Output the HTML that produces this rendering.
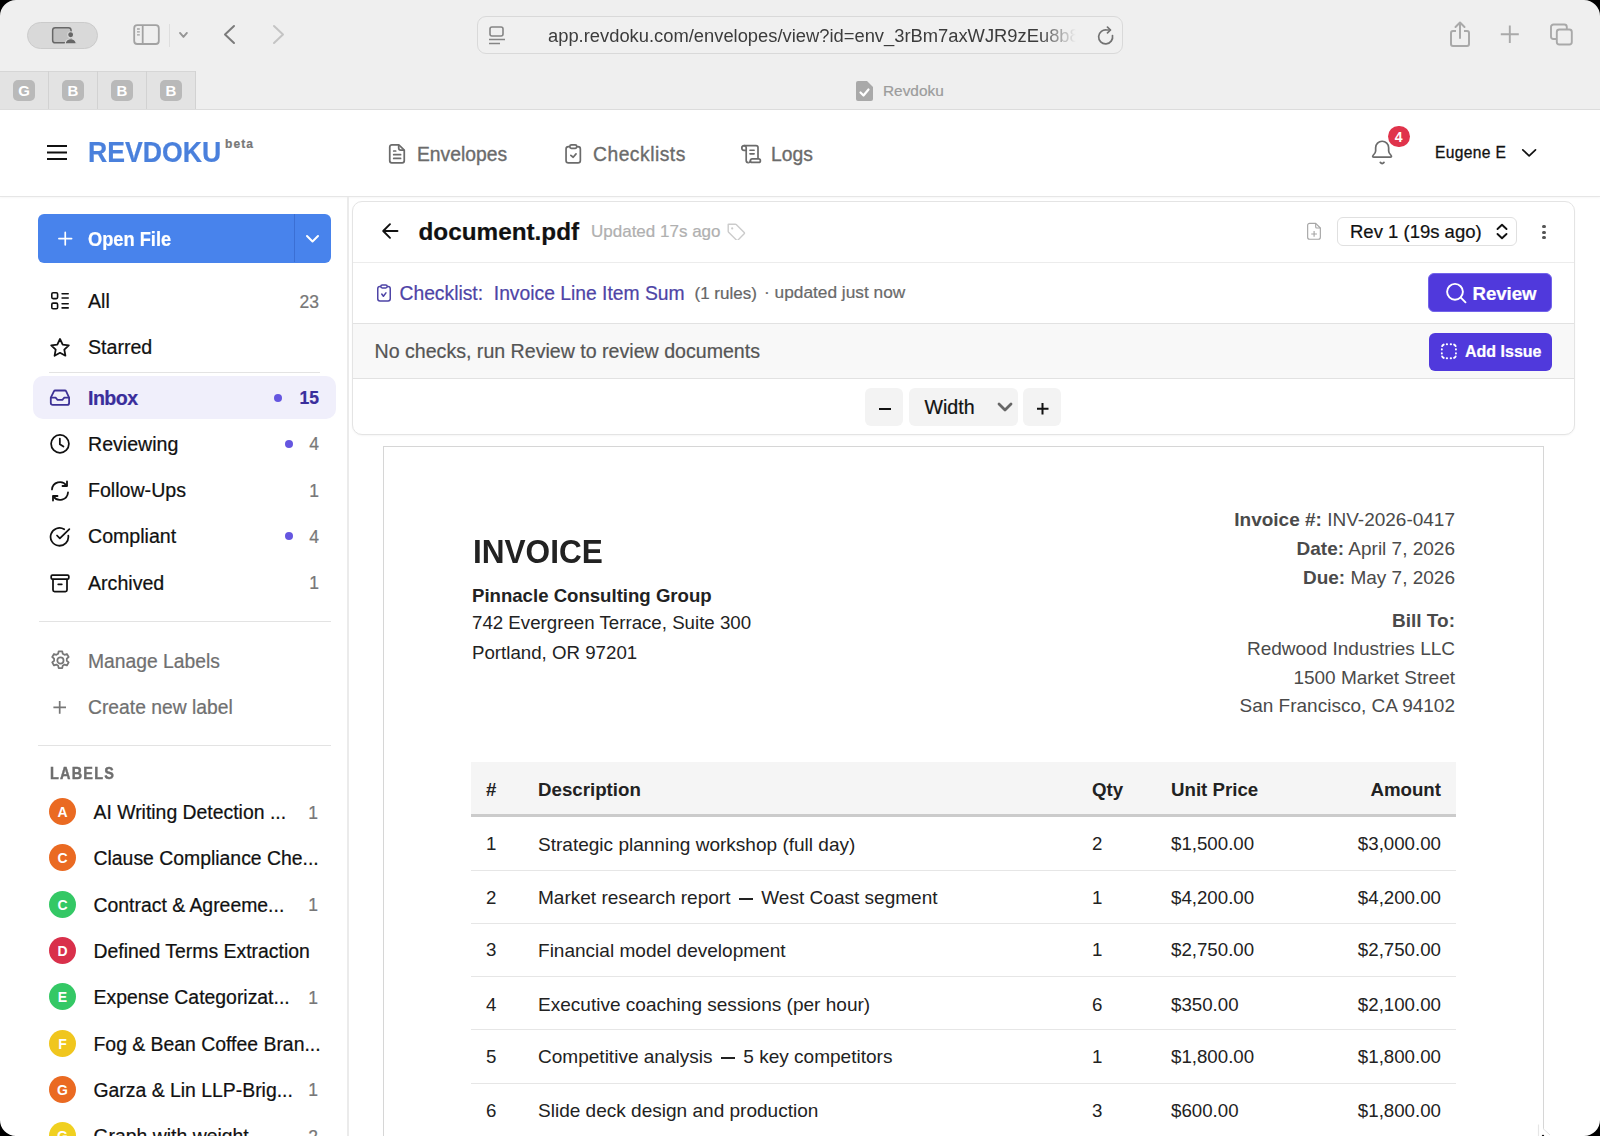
<!DOCTYPE html>
<html><head><meta charset="utf-8"><title>Revdoku</title>
<style>
html,body{margin:0;padding:0;}
body{width:1600px;height:1136px;position:relative;overflow:hidden;background:#fff;font-family:"Liberation Sans",sans-serif;}
.t{position:absolute;line-height:1;white-space:nowrap;}
.ui{-webkit-text-stroke:0.22px currentColor;}
svg{display:block}
</style></head><body>
<div style="position:absolute;left:0px;top:0px;width:1600px;height:109px;background:#efefef"></div>
<div style="position:absolute;left:0px;top:109px;width:1600px;height:1px;background:#dcdcdc"></div>
<div style="position:absolute;left:0px;top:71px;width:196px;height:38px;background:#e3e3e3;border-top:1px solid #d6d6d6;box-sizing:border-box"></div>
<div style="position:absolute;left:13px;top:80px;width:22px;height:21px;border-radius:5px;background:#b9b9b9;color:#fff;font:700 15px/21px 'Liberation Sans';text-align:center">G</div>
<div style="position:absolute;left:47.8px;top:71px;width:1px;height:38px;background:#d2d2d2"></div>
<div style="position:absolute;left:62px;top:80px;width:22px;height:21px;border-radius:5px;background:#b9b9b9;color:#fff;font:700 15px/21px 'Liberation Sans';text-align:center">B</div>
<div style="position:absolute;left:97.0px;top:71px;width:1px;height:38px;background:#d2d2d2"></div>
<div style="position:absolute;left:111px;top:80px;width:22px;height:21px;border-radius:5px;background:#b9b9b9;color:#fff;font:700 15px/21px 'Liberation Sans';text-align:center">B</div>
<div style="position:absolute;left:146.2px;top:71px;width:1px;height:38px;background:#d2d2d2"></div>
<div style="position:absolute;left:160px;top:80px;width:22px;height:21px;border-radius:5px;background:#b9b9b9;color:#fff;font:700 15px/21px 'Liberation Sans';text-align:center">B</div>
<div style="position:absolute;left:195px;top:71px;width:1px;height:38px;background:#d2d2d2"></div>
<div style="position:absolute;left:27px;top:22px;width:71px;height:27px;background:#d9d9d9;border:1px solid #cbcbcb;border-radius:14px;box-sizing:border-box"></div>
<svg style="position:absolute;left:51px;top:26px;" width="27" height="19" viewBox="0 0 27 19" fill="none"><rect x="1.65" y="1.75" width="18.4" height="15.1" rx="2.6" stroke="#676767" stroke-width="1.5" fill="#c1c1c1"/><circle cx="19.65" cy="8.8" r="3" fill="#666" stroke="#d9d9d9" stroke-width="1.1"/><path d="M14.2 17.9a5.55 5.2 0 0 1 11.1 0z" fill="#666" stroke="#d9d9d9" stroke-width="1.1"/></svg>
<svg style="position:absolute;left:133px;top:24px;" width="27" height="21" viewBox="0 0 27 21" fill="none"><rect x="1.2" y="1.2" width="24.6" height="18.8" rx="3" stroke="#a2a2a2" stroke-width="1.8"/><path d="M9.7 1.2v18.8" stroke="#a2a2a2" stroke-width="1.8"/><path d="M4 5h2.8M4 7.9h2.8M4 10.8h2.8" stroke="#a2a2a2" stroke-width="1.3"/></svg>
<div style="position:absolute;left:169px;top:24px;width:1px;height:23px;background:#dedede"></div>
<svg style="position:absolute;left:177px;top:30px;" width="12" height="9" viewBox="0 0 12 9" fill="none"><path d="M3 2.9L6.45 6.9 9.9 2.9" stroke="#959595" stroke-width="1.9" stroke-linecap="round" stroke-linejoin="round"/></svg>
<svg style="position:absolute;left:222px;top:24px;" width="15" height="21" viewBox="0 0 15 21" fill="none"><path d="M12 2L3 10.5 12 19" stroke="#7b7b7b" stroke-width="2" stroke-linecap="round" stroke-linejoin="round"/></svg>
<svg style="position:absolute;left:271px;top:24px;" width="15" height="21" viewBox="0 0 15 21" fill="none"><path d="M3 2l9 8.5L3 19" stroke="#c4c4c4" stroke-width="2" stroke-linecap="round" stroke-linejoin="round"/></svg>
<div style="position:absolute;left:477px;top:16px;width:646px;height:38px;background:#f0f0f0;border:1px solid #d9d9d9;border-radius:9px;box-sizing:border-box"></div>
<svg style="position:absolute;left:488px;top:26px;" width="18" height="20" viewBox="0 0 18 20" fill="none"><rect x="2" y="1" width="13" height="9" rx="2" stroke="#858585" stroke-width="1.6"/><path d="M1 13.5h16M1 17.5h11" stroke="#858585" stroke-width="1.6"/></svg>
<div class="t" style="left:548px;top:25px;font-size:18.35px;line-height:22px;color:#3c3c3c;width:528px;overflow:hidden;-webkit-mask-image:linear-gradient(90deg,#000 0,#000 93%,transparent 100%)">app.revdoku.com/envelopes/view?id=env_3rBm7axWJR9zEu8b8bx</div>
<svg style="position:absolute;left:1097px;top:26px;" width="20" height="21" viewBox="0 0 20 21" fill="none"><path d="M15.5 9.5A7 7 0 1 1 10 4h3" stroke="#727272" stroke-width="1.7" stroke-linecap="round"/><path d="M10.5 1.2l3 2.8-3 2.8" stroke="#727272" stroke-width="1.7" stroke-linecap="round" stroke-linejoin="round"/></svg>
<svg style="position:absolute;left:1449px;top:21px;" width="22" height="27" viewBox="0 0 22 27" fill="none"><path d="M7 10H4a2 2 0 0 0-2 2v11a2 2 0 0 0 2 2h14a2 2 0 0 0 2-2V12a2 2 0 0 0-2-2h-3" stroke="#a9a9a9" stroke-width="2"/><path d="M11 17V2M6.5 6L11 1.5 15.5 6" stroke="#a9a9a9" stroke-width="2" stroke-linecap="round" stroke-linejoin="round"/></svg>
<svg style="position:absolute;left:1499px;top:24px;" width="22" height="21" viewBox="0 0 22 21" fill="none"><path d="M10.8 1.5V19M1.8 10.25h18" stroke="#a9a9a9" stroke-width="1.9"/></svg>
<svg style="position:absolute;left:1548px;top:22px;" width="27" height="26" viewBox="0 0 27 26" fill="none"><path d="M8.8 17H5.5A2.5 2.5 0 0 1 3 14.5V5A2.5 2.5 0 0 1 5.5 2.5H16.3A2.5 2.5 0 0 1 18.8 5V7.5" stroke="#a9a9a9" stroke-width="1.9"/><rect x="8.8" y="7.5" width="15" height="15" rx="2.5" stroke="#a9a9a9" stroke-width="1.9"/></svg>
<svg style="position:absolute;left:855px;top:80px;" width="19" height="22" viewBox="0 0 19 22" fill="none"><path d="M3 1h9l6 6v12a2 2 0 0 1-2 2H3a2 2 0 0 1-2-2V3a2 2 0 0 1 2-2z" fill="#a9a9a9"/><path d="M5.5 12.5l3 3 5-6" stroke="#fff" stroke-width="2.2" stroke-linecap="round" stroke-linejoin="round"/></svg>
<div class="t ui" style="left:883px;top:82.76px;font-size:15.4px;font-weight:400;color:#9c9c9c;">Revdoku</div>
<div style="position:absolute;left:0px;top:110px;width:1600px;height:86px;background:#fff"></div>
<div style="position:absolute;left:0px;top:196px;width:1600px;height:1px;background:#e6e6e6;box-shadow:0 1px 2px rgba(0,0,0,0.05)"></div>
<svg style="position:absolute;left:46px;top:144px;" width="22" height="17" viewBox="0 0 22 17" fill="none"><path d="M1 2h20M1 8.5h20M1 15h20" stroke="#111" stroke-width="2.2"/></svg>
<div class="t ui" style="left:88px;top:138.42px;font-size:28.8px;font-weight:700;color:#4a80dc;transform:scaleX(0.925);transform-origin:0 0">REVDOKU</div>
<div class="t ui" style="left:225px;top:138.24px;font-size:12px;font-weight:700;color:#777;letter-spacing:1.1px">beta</div>
<svg style="position:absolute;left:388.4px;top:143px;" width="19" height="22" viewBox="0 0 19 22" fill="none"><path d="M3.9 1.75h6.9l5.45 5.45v10.6a2 2 0 0 1-2 2H3.75a2 2 0 0 1-2-2V3.9a2.15 2.15 0 0 1 2.15-2.15z" stroke="#6b6b6b" stroke-width="1.75" stroke-linejoin="round"/><path d="M10.7 1.9v3.2a2.1 2.1 0 0 0 2.1 2.1h3.3" stroke="#6b6b6b" stroke-width="1.75"/><path d="M5.7 8h2M5.7 11.7h6.9M5.7 15.4h6.9" stroke="#6b6b6b" stroke-width="1.7" stroke-linecap="round"/></svg>
<div class="t ui" style="left:417px;top:144.76px;font-size:19.3px;font-weight:400;color:#6b6b6b;-webkit-text-stroke:0.35px #6b6b6b">Envelopes</div>
<svg style="position:absolute;left:564px;top:143px;" width="19" height="22" viewBox="0 0 19 22" fill="none"><rect x="2.05" y="3.65" width="14.3" height="16.3" rx="2.4" stroke="#6b6b6b" stroke-width="1.7"/><rect x="5.85" y="1.95" width="6.9" height="3.5" rx="1.6" stroke="#6b6b6b" stroke-width="1.7" fill="#fff"/><path d="M6.85 12.3L9.2 14.25 12.05 10.85" stroke="#6b6b6b" stroke-width="1.7" stroke-linecap="round" stroke-linejoin="round"/></svg>
<div class="t ui" style="left:593px;top:144.76px;font-size:19.3px;font-weight:400;color:#6b6b6b;-webkit-text-stroke:0.35px #6b6b6b;letter-spacing:0.5px">Checklists</div>
<svg style="position:absolute;left:740px;top:143px;" width="23" height="22" viewBox="0 0 23 22" fill="none"><path d="M4 2.6h12a2 2 0 0 1 2 2V15.9" stroke="#6b6b6b" stroke-width="1.7"/><path d="M6.2 7.4H4.1A2.4 2.4 0 0 1 1.8 5 2.4 2.4 0 0 1 4.1 2.6 2.1 2.1 0 0 1 6.2 4.7V17.6a2 2 0 0 0 2 2" stroke="#6b6b6b" stroke-width="1.7" stroke-linejoin="round"/><rect x="10.4" y="15.9" width="10" height="3.5" rx="1.75" stroke="#6b6b6b" stroke-width="1.7"/><path d="M8.2 19.6a2 2 0 0 0 2.2-2" stroke="#6b6b6b" stroke-width="1.7"/><path d="M9.95 7.2h4.2M9.95 10.85h4.2" stroke="#6b6b6b" stroke-width="1.6" stroke-linecap="round"/></svg>
<div class="t ui" style="left:771px;top:144.76px;font-size:19.3px;font-weight:400;color:#6b6b6b;-webkit-text-stroke:0.35px #6b6b6b">Logs</div>
<svg style="position:absolute;left:1369px;top:138px;" width="27" height="28" viewBox="0 0 27 28" fill="none"><path d="M6.65 9.75a6.5 6.5 0 0 1 13 0v3.2c0 1.8 1 3 2.3 4.3 1 1 .5 1.9-.7 1.9H4.9c-1.2 0-1.7-.9-.7-1.9 1.3-1.3 2.45-2.5 2.45-4.3z" stroke="#6b6b6b" stroke-width="1.7" stroke-linejoin="round"/><path d="M11.3 24.4q1.85 2.3 3.7 0" stroke="#6b6b6b" stroke-width="1.7" stroke-linecap="round"/></svg>
<div style="position:absolute;left:1388px;top:125.5px;width:21.5px;height:21.5px;border-radius:50%;background:#e0334b;color:#fff;font:700 14px/22px 'Liberation Sans';text-align:center">4</div>
<div class="t ui" style="left:1435px;top:145.39px;font-size:15.6px;font-weight:400;color:#111;-webkit-text-stroke:0.3px #111;letter-spacing:0.35px">Eugene E</div>
<svg style="position:absolute;left:1521px;top:147px;" width="17" height="11" viewBox="0 0 17 11" fill="none"><path d="M1.8 2.8L8.15 8.9 14.5 2.8" stroke="#111" stroke-width="1.7" stroke-linecap="round" stroke-linejoin="round"/></svg>
<div style="position:absolute;left:347px;top:197px;width:2px;height:939px;background:#ebebeb"></div>
<div style="position:absolute;left:38px;top:214px;width:293px;height:48.5px;background:#4883ec;border-radius:6px"></div>
<div style="position:absolute;left:294px;top:214px;width:1px;height:48px;background:#3b6fd4"></div>
<svg style="position:absolute;left:56px;top:230px;" width="18" height="18" viewBox="0 0 18 18" fill="none"><path d="M9.25 2.4v12.4M2.9 8.6h12.7" stroke="#fff" stroke-width="1.7" stroke-linecap="round"/></svg>
<div class="t ui" style="left:87.8px;top:229.05px;font-size:20.5px;font-weight:700;color:#fff;transform:scaleX(0.89);transform-origin:0 0">Open File</div>
<svg style="position:absolute;left:305px;top:234px;" width="15" height="10" viewBox="0 0 15 10" fill="none"><path d="M2 2l5.5 5.5L13 2" stroke="#fff" stroke-width="2" stroke-linecap="round" stroke-linejoin="round"/></svg>
<svg style="position:absolute;left:50px;top:291px;" width="20" height="20" viewBox="0 0 20 20" fill="none"><rect x="1.8" y="1.8" width="5.8" height="5.8" rx="1.3" stroke="#111" stroke-width="1.6"/><rect x="1.8" y="12.1" width="5.8" height="5.7" rx="1.3" stroke="#111" stroke-width="1.6"/><path d="M12.1 2.8h6.1M12.1 7h6.1M12.1 12.7h6.1M12.1 16.9h6.1" stroke="#111" stroke-width="1.6" stroke-linecap="round"/></svg>
<div class="t ui" style="left:88px;top:292.01px;font-size:19.6px;font-weight:400;color:#111;">All</div>
<div class="t ui" style="right:1281px;top:293.79px;font-size:17.5px;font-weight:400;color:#777;">23</div>
<svg style="position:absolute;left:49px;top:336.6px;" width="22" height="22" viewBox="0 0 22 22" fill="none"><path d="M11 2l2.7 5.6 6.1.8-4.5 4.2 1.1 6.1L11 15.8l-5.4 2.9 1.1-6.1L2.2 8.4l6.1-.8z" stroke="#111" stroke-width="1.8" stroke-linejoin="round"/></svg>
<div class="t ui" style="left:88px;top:338.01px;font-size:19.6px;font-weight:400;color:#111;">Starred</div>
<div style="position:absolute;left:49px;top:372px;width:271px;height:1px;background:#e3e3e3"></div>
<div style="position:absolute;left:33px;top:376px;width:303px;height:43px;background:#f0effb;border-radius:10px"></div>
<svg style="position:absolute;left:49px;top:388px;" width="22" height="20" viewBox="0 0 22 20" fill="none"><path d="M1.8 9.6L4.9 3.3Q5.3 2.5 6.2 2.5H15.9Q16.8 2.5 17.2 3.3L20.1 9.6V14.9Q20.1 16.9 18.1 16.9H3.8Q1.8 16.9 1.8 14.9Z" stroke="#3d3196" stroke-width="1.8" stroke-linejoin="round"/><path d="M1.8 9.6H6.6L8.2 11.5Q8.6 11.9 9.2 11.9H12.7Q13.3 11.9 13.7 11.5L15.3 9.6H20.1" stroke="#3d3196" stroke-width="1.8" stroke-linejoin="round"/></svg>
<div class="t ui" style="left:88px;top:388.71px;font-size:19.6px;font-weight:700;color:#3a2e9c;letter-spacing:-0.55px">Inbox</div>
<div style="position:absolute;left:274px;top:394px;width:8px;height:8px;background:#6556e0;border-radius:50%"></div>
<div class="t ui" style="right:1281px;top:390.49px;font-size:17.5px;font-weight:700;color:#3a2e9c;">15</div>
<svg style="position:absolute;left:49px;top:433px;" width="22" height="22" viewBox="0 0 22 22" fill="none"><circle cx="11" cy="10.85" r="8.9" stroke="#111" stroke-width="1.75"/><path d="M10.85 5.6V11.2l3.6 2.3" stroke="#111" stroke-width="1.75" stroke-linecap="round" stroke-linejoin="round"/></svg>
<div class="t ui" style="left:88px;top:434.71px;font-size:19.6px;font-weight:400;color:#111;">Reviewing</div>
<div style="position:absolute;left:285px;top:440px;width:8px;height:8px;background:#6556e0;border-radius:50%"></div>
<div class="t ui" style="right:1281px;top:436.49px;font-size:17.5px;font-weight:400;color:#777;">4</div>
<svg style="position:absolute;left:49px;top:480px;" width="22" height="22" viewBox="0 0 22 22" fill="none"><path d="M3 9.5A8 8 0 0 1 17.5 5.5M19 12.5A8 8 0 0 1 4.5 16.5" stroke="#111" stroke-width="1.8" stroke-linecap="round"/><path d="M18 1.5v4.5h-4.5M4 20.5V16h4.5" stroke="#111" stroke-width="1.8" stroke-linecap="round" stroke-linejoin="round"/></svg>
<div class="t ui" style="left:88px;top:480.81px;font-size:19.6px;font-weight:400;color:#111;">Follow-Ups</div>
<div class="t ui" style="right:1281px;top:482.59px;font-size:17.5px;font-weight:400;color:#777;">1</div>
<svg style="position:absolute;left:49px;top:526px;" width="22" height="22" viewBox="0 0 22 22" fill="none"><path d="M19.3 9.7A8.9 8.9 0 1 1 15.2 3.3" stroke="#111" stroke-width="1.75" stroke-linecap="round"/><path d="M8 9.5l2.85 2.9 9.5-9.2" stroke="#111" stroke-width="1.75" stroke-linecap="round" stroke-linejoin="round"/></svg>
<div class="t ui" style="left:88px;top:527.21px;font-size:19.6px;font-weight:400;color:#111;">Compliant</div>
<div style="position:absolute;left:285px;top:532px;width:8px;height:8px;background:#6556e0;border-radius:50%"></div>
<div class="t ui" style="right:1281px;top:528.99px;font-size:17.5px;font-weight:400;color:#777;">4</div>
<svg style="position:absolute;left:49px;top:572px;" width="22" height="22" viewBox="0 0 22 22" fill="none"><rect x="2.2" y="3" width="17.6" height="4.1" rx="1.2" stroke="#111" stroke-width="1.75"/><path d="M4 7.5v10.4a1.6 1.6 0 0 0 1.6 1.6h10.8a1.6 1.6 0 0 0 1.6-1.6V7.5M9.2 12.3h3.6" stroke="#111" stroke-width="1.75" stroke-linecap="round"/></svg>
<div class="t ui" style="left:88px;top:573.61px;font-size:19.6px;font-weight:400;color:#111;">Archived</div>
<div class="t ui" style="right:1281px;top:575.39px;font-size:17.5px;font-weight:400;color:#777;">1</div>
<div style="position:absolute;left:39px;top:621px;width:292px;height:1px;background:#e3e3e3"></div>
<svg style="position:absolute;left:49.2px;top:649.2px;" width="22.9" height="22.9" viewBox="0 0 22 22" fill="none"><path d="M9.3 2.2h3.4l.5 2.4 1.7 1 2.3-.8 1.7 2.9-1.8 1.6v2l1.8 1.6-1.7 2.9-2.3-.8-1.7 1-.5 2.4H9.3l-.5-2.4-1.7-1-2.3.8-1.7-2.9 1.8-1.6v-2L3.1 7.7l1.7-2.9 2.3.8 1.7-1z" stroke="#777" stroke-width="1.7" stroke-linejoin="round"/><circle cx="11" cy="11" r="3" stroke="#777" stroke-width="1.7"/></svg>
<div class="t ui" style="left:88px;top:652.06px;font-size:19.3px;font-weight:400;color:#707070;">Manage Labels</div>
<svg style="position:absolute;left:50px;top:697px;" width="20" height="20" viewBox="0 0 20 20" fill="none"><path d="M9.7 3.9V16.8M3.4 10.35H16" stroke="#777" stroke-width="1.7"/></svg>
<div class="t ui" style="left:88px;top:698.06px;font-size:19.3px;font-weight:400;color:#707070;">Create new label</div>
<div style="position:absolute;left:38px;top:745px;width:293px;height:1px;background:#e3e3e3"></div>
<div class="t ui" style="left:49.7px;top:766.05px;font-size:16.6px;font-weight:700;color:#6e6e6e;letter-spacing:1.4px;transform:scaleX(0.87);transform-origin:0 0;-webkit-text-stroke:0.45px #6e6e6e">LABELS</div>
<div style="position:absolute;left:49px;top:798.0px;width:27px;height:27px;border-radius:50%;background:#ea6a22;color:#fff;font:700 14px/28.5px 'Liberation Sans';text-align:center">A</div>
<div class="t ui" style="left:93.5px;top:803.08px;font-size:19.4px;font-weight:400;color:#111;">AI Writing Detection ...</div>
<div class="t ui" style="right:1282px;top:804.69px;font-size:17.5px;font-weight:400;color:#777;">1</div>
<div style="position:absolute;left:49px;top:844.3px;width:27px;height:27px;border-radius:50%;background:#ea6a22;color:#fff;font:700 14px/28.5px 'Liberation Sans';text-align:center">C</div>
<div class="t ui" style="left:93.5px;top:849.38px;font-size:19.4px;font-weight:400;color:#111;">Clause Compliance Che...</div>
<div style="position:absolute;left:49px;top:890.6px;width:27px;height:27px;border-radius:50%;background:#34c865;color:#fff;font:700 14px/28.5px 'Liberation Sans';text-align:center">C</div>
<div class="t ui" style="left:93.5px;top:895.68px;font-size:19.4px;font-weight:400;color:#111;">Contract &amp; Agreeme...</div>
<div class="t ui" style="right:1282px;top:897.29px;font-size:17.5px;font-weight:400;color:#777;">1</div>
<div style="position:absolute;left:49px;top:936.9px;width:27px;height:27px;border-radius:50%;background:#d9304b;color:#fff;font:700 14px/28.5px 'Liberation Sans';text-align:center">D</div>
<div class="t ui" style="left:93.5px;top:941.98px;font-size:19.4px;font-weight:400;color:#111;">Defined Terms Extraction</div>
<div style="position:absolute;left:49px;top:983.2px;width:27px;height:27px;border-radius:50%;background:#34c865;color:#fff;font:700 14px/28.5px 'Liberation Sans';text-align:center">E</div>
<div class="t ui" style="left:93.5px;top:988.28px;font-size:19.4px;font-weight:400;color:#111;">Expense Categorizat...</div>
<div class="t ui" style="right:1282px;top:989.89px;font-size:17.5px;font-weight:400;color:#777;">1</div>
<div style="position:absolute;left:49px;top:1029.5px;width:27px;height:27px;border-radius:50%;background:#f0c61e;color:#fff;font:700 14px/28.5px 'Liberation Sans';text-align:center">F</div>
<div class="t ui" style="left:93.5px;top:1034.58px;font-size:19.4px;font-weight:400;color:#111;">Fog &amp; Bean Coffee Bran...</div>
<div style="position:absolute;left:49px;top:1075.8px;width:27px;height:27px;border-radius:50%;background:#ea6a22;color:#fff;font:700 14px/28.5px 'Liberation Sans';text-align:center">G</div>
<div class="t ui" style="left:93.5px;top:1080.88px;font-size:19.4px;font-weight:400;color:#111;">Garza &amp; Lin LLP-Brig...</div>
<div class="t ui" style="right:1282px;top:1082.49px;font-size:17.5px;font-weight:400;color:#777;">1</div>
<div style="position:absolute;left:49px;top:1122.1px;width:27px;height:27px;border-radius:50%;background:#f0d020;color:#fff;font:700 14px/28.5px 'Liberation Sans';text-align:center">G</div>
<div class="t ui" style="left:93.5px;top:1127.18px;font-size:19.4px;font-weight:400;color:#111;">Graph with weight</div>
<div class="t ui" style="right:1282px;top:1128.79px;font-size:17.5px;font-weight:400;color:#777;">2</div>
<div style="position:absolute;left:351.6px;top:200.8px;width:1223.4px;height:234.7px;background:#fff;border:1px solid #e4e4e4;border-radius:10px;box-sizing:border-box;box-shadow:0 1px 2px rgba(0,0,0,0.04)"></div>
<div style="position:absolute;left:353px;top:262px;width:1221px;height:1px;background:#ececec"></div>
<div style="position:absolute;left:353px;top:323px;width:1221px;height:56px;background:#f8f8f8;border-top:1px solid #e2e2e2;border-bottom:1px solid #e2e2e2;box-sizing:border-box"></div>
<svg style="position:absolute;left:381px;top:222px;" width="18" height="18" viewBox="0 0 18 18" fill="none"><path d="M16.5 9H2.5M9 2.2L2.2 9 9 15.8" stroke="#111" stroke-width="1.9" stroke-linecap="round" stroke-linejoin="round"/></svg>
<div class="t ui" style="left:418.5px;top:220.03px;font-size:24.3px;font-weight:700;color:#111;">document.pdf</div>
<div class="t ui" style="left:591px;top:223.01px;font-size:17px;font-weight:400;color:#b0b0b0;">Updated 17s ago</div>
<svg style="position:absolute;left:725.5px;top:222px;" width="21" height="18" viewBox="0 0 21 18" fill="none"><path d="M2.6 2.2h6.6q.6 0 1 .4l8 8q.6.6 0 1.2l-6.4 6.4q-.6.6-1.2 0l-8-8q-.4-.4-.4-1V2.6q0-.4.4-.4z" stroke="#cbcbcb" stroke-width="1.4" stroke-linejoin="round"/><circle cx="6.2" cy="6.4" r="1.1" fill="#cbcbcb"/></svg>
<svg style="position:absolute;left:1306px;top:222px;" width="18" height="19" viewBox="0 0 18 19" fill="none"><path d="M3.65 1.35h6.05l4.65 4.65v9.25a2 2 0 0 1-2 2H3.65a2 2 0 0 1-2-2V3.35a2 2 0 0 1 2-2z" stroke="#a6a6a6" stroke-width="1.15" stroke-linejoin="round"/><path d="M9.7 1.5v3.5a1 1 0 0 0 1 1h3.5M8.1 9.1v5.7M5.25 11.95h5.7" stroke="#a6a6a6" stroke-width="1.15"/></svg>
<div style="position:absolute;left:1337px;top:217px;width:180px;height:29px;background:#fff;border:1px solid #e0e0e0;border-radius:6px;box-sizing:border-box"></div>
<div class="t ui" style="left:1350px;top:223.34px;font-size:18.5px;font-weight:400;color:#111;">Rev 1 (19s ago)</div>
<svg style="position:absolute;left:1495px;top:223px;" width="14" height="17" viewBox="0 0 14 17" fill="none"><path d="M2.5 6L7 1.8 11.5 6M2.5 11L7 15.2 11.5 11" stroke="#111" stroke-width="1.9" stroke-linecap="round" stroke-linejoin="round"/></svg>
<div style="position:absolute;left:1542.4px;top:224.9px;width:3.4px;height:3.4px;background:#555;border-radius:50%"></div>
<div style="position:absolute;left:1542.4px;top:230.5px;width:3.4px;height:3.4px;background:#555;border-radius:50%"></div>
<div style="position:absolute;left:1542.4px;top:236.10000000000002px;width:3.4px;height:3.4px;background:#555;border-radius:50%"></div>
<svg style="position:absolute;left:376px;top:283px;" width="17" height="20" viewBox="0 0 17 20" fill="none"><rect x="1.75" y="3.45" width="12.5" height="14.6" rx="2.2" stroke="#4e44a6" stroke-width="1.5"/><rect x="4.85" y="1.95" width="6.3" height="3" rx="1.4" stroke="#4e44a6" stroke-width="1.5" fill="#fff"/><path d="M5.75 11L7.4 13.3 9.95 9.9" stroke="#4e44a6" stroke-width="1.5" stroke-linecap="round" stroke-linejoin="round"/></svg>
<div class="t ui" style="left:399.5px;top:284.26px;font-size:19.3px;font-weight:400;color:#4e44a6;">Checklist:&nbsp; Invoice Line Item Sum</div>
<div class="t ui" style="left:694.5px;top:284.61px;font-size:17px;font-weight:400;color:#666;">(1 rules)</div>
<div class="t ui" style="left:764px;top:284.36px;font-size:17.3px;font-weight:400;color:#6a6a6a;">· updated just now</div>
<div style="position:absolute;left:1428px;top:273px;width:124px;height:39px;background:#5039dc;border:1px solid #7263ea;border-radius:6px;box-sizing:border-box"></div>
<svg style="position:absolute;left:1444.6px;top:281.7px;" width="23" height="23" viewBox="0 0 23 23" fill="none"><circle cx="10" cy="9.8" r="7.9" stroke="#fff" stroke-width="1.9"/><path d="M15.6 15.4l4.9 4.9" stroke="#fff" stroke-width="1.9" stroke-linecap="round"/></svg>
<div class="t ui" style="left:1472.5px;top:285.06px;font-size:18.6px;font-weight:700;color:#fff;">Review</div>
<div class="t ui" style="left:374.5px;top:342.21px;font-size:19.6px;font-weight:400;color:#555;">No checks, run Review to review documents</div>
<div style="position:absolute;left:1429px;top:332.5px;width:123px;height:38px;background:#5039dc;border-radius:6px"></div>
<svg style="position:absolute;left:1440px;top:342px;" width="18" height="18" viewBox="0 0 18 18" fill="none"><path d="M2.15 4.1A3.2 3.2 0 0 1 3.7 2.55M14.1 2.55A3.2 3.2 0 0 1 15.65 4.1M15.65 14.4A3.2 3.2 0 0 1 14.1 15.95M3.7 15.95A3.2 3.2 0 0 1 2.15 14.4M6.75 2.25h.35M10.7 2.25h.35M6.75 16.25h.35M10.7 16.25h.35M1.85 7.2v.35M1.85 11.2v.35M15.95 7.2v.35M15.95 11.2v.35" stroke="#fff" stroke-width="1.9" stroke-linecap="round"/></svg>
<div class="t ui" style="left:1465px;top:343.66px;font-size:16.0px;font-weight:700;color:#fff;">Add Issue</div>
<div style="position:absolute;left:865px;top:388px;width:38px;height:38px;background:#f3f3f3;border-radius:6px"></div>
<div style="position:absolute;left:878.5px;top:407.5px;width:12px;height:2px;background:#111"></div>
<div style="position:absolute;left:909px;top:388px;width:109px;height:38px;background:#f3f3f3;border-radius:6px"></div>
<div class="t ui" style="left:924.5px;top:398.41px;font-size:19.6px;font-weight:400;color:#111;">Width</div>
<svg style="position:absolute;left:996px;top:401px;" width="18" height="12" viewBox="0 0 18 12" fill="none"><path d="M3 3l6 6 6-6" stroke="#666" stroke-width="2.8" stroke-linecap="round" stroke-linejoin="round"/></svg>
<div style="position:absolute;left:1023px;top:388px;width:38px;height:38px;background:#f3f3f3;border-radius:6px"></div>
<svg style="position:absolute;left:1035px;top:401px;" width="15" height="15" viewBox="0 0 15 15" fill="none"><path d="M7.5 2v11.5M2 7.75h11.5" stroke="#111" stroke-width="2"/></svg>
<div style="position:absolute;left:383px;top:446px;width:1161px;height:700px;background:#fff;border:1px solid #d6d6d6;box-sizing:border-box"></div>
<div class="t " style="left:473px;top:534.86px;font-size:33.6px;font-weight:700;color:#222;transform:scaleX(0.94);transform-origin:0 0">INVOICE</div>
<div class="t " style="left:472px;top:587.06px;font-size:18.6px;font-weight:700;color:#222;">Pinnacle Consulting Group</div>
<div class="t " style="left:472px;top:613.57px;font-size:18.7px;font-weight:400;color:#222;">742 Evergreen Terrace, Suite 300</div>
<div class="t " style="left:472px;top:643.57px;font-size:18.7px;font-weight:400;color:#222;">Portland, OR 97201</div>
<div class="t " style="right:145px;top:510.32px;font-size:19px;font-weight:400;color:#4a4a4a;"><b>Invoice #:</b> INV-2026-0417</div>
<div class="t " style="right:145px;top:539.12px;font-size:19px;font-weight:400;color:#4a4a4a;"><b>Date:</b> April 7, 2026</div>
<div class="t " style="right:145px;top:567.62px;font-size:19px;font-weight:400;color:#4a4a4a;"><b>Due:</b> May 7, 2026</div>
<div class="t " style="right:145px;top:611.12px;font-size:19px;font-weight:400;color:#4a4a4a;"><b>Bill To:</b></div>
<div class="t " style="right:145px;top:638.72px;font-size:19px;font-weight:400;color:#4a4a4a;">Redwood Industries LLC</div>
<div class="t " style="right:145px;top:668.12px;font-size:19px;font-weight:400;color:#4a4a4a;">1500 Market Street</div>
<div class="t " style="right:145px;top:695.72px;font-size:19px;font-weight:400;color:#4a4a4a;">San Francisco, CA 94102</div>
<div style="position:absolute;left:471px;top:762px;width:985px;height:52px;background:#f5f5f5"></div>
<div style="position:absolute;left:471px;top:814px;width:985px;height:3px;background:#cbcbcb"></div>
<div class="t " style="left:486px;top:780.97px;font-size:18.7px;font-weight:700;color:#222;">#</div>
<div class="t " style="left:538px;top:780.97px;font-size:18.7px;font-weight:700;color:#222;">Description</div>
<div class="t " style="left:1092px;top:780.97px;font-size:18.7px;font-weight:700;color:#222;">Qty</div>
<div class="t " style="left:1171px;top:780.97px;font-size:18.7px;font-weight:700;color:#222;">Unit Price</div>
<div class="t " style="right:159px;top:780.97px;font-size:18.7px;font-weight:700;color:#222;">Amount</div>
<div style="position:absolute;left:471px;top:869.5px;width:985px;height:1px;background:#e6e6e6"></div>
<div style="position:absolute;left:471px;top:922.5px;width:985px;height:1px;background:#e6e6e6"></div>
<div style="position:absolute;left:471px;top:976px;width:985px;height:1px;background:#e6e6e6"></div>
<div style="position:absolute;left:471px;top:1029px;width:985px;height:1px;background:#e6e6e6"></div>
<div style="position:absolute;left:471px;top:1083px;width:985px;height:1px;background:#e6e6e6"></div>
<div class="t " style="left:486px;top:835.27px;font-size:18.7px;font-weight:400;color:#222;">1</div>
<div class="t " style="left:538px;top:834.97px;font-size:19.05px;font-weight:400;color:#222;">Strategic planning workshop (full day)</div>
<div class="t " style="left:1092px;top:835.27px;font-size:18.7px;font-weight:400;color:#222;">2</div>
<div class="t " style="left:1171px;top:835.27px;font-size:18.7px;font-weight:400;color:#222;">$1,500.00</div>
<div class="t " style="right:159px;top:835.27px;font-size:18.7px;font-weight:400;color:#222;">$3,000.00</div>
<div class="t " style="left:486px;top:888.77px;font-size:18.7px;font-weight:400;color:#222;">2</div>
<div class="t " style="left:538px;top:888.47px;font-size:19.05px;font-weight:400;color:#222;">Market research report <span style="display:inline-block;width:14.4px;height:1.7px;background:#222;vertical-align:0.25em;margin:0 2.9px"></span> West Coast segment</div>
<div class="t " style="left:1092px;top:888.77px;font-size:18.7px;font-weight:400;color:#222;">1</div>
<div class="t " style="left:1171px;top:888.77px;font-size:18.7px;font-weight:400;color:#222;">$4,200.00</div>
<div class="t " style="right:159px;top:888.77px;font-size:18.7px;font-weight:400;color:#222;">$4,200.00</div>
<div class="t " style="left:486px;top:941.27px;font-size:18.7px;font-weight:400;color:#222;">3</div>
<div class="t " style="left:538px;top:940.97px;font-size:19.05px;font-weight:400;color:#222;">Financial model development</div>
<div class="t " style="left:1092px;top:941.27px;font-size:18.7px;font-weight:400;color:#222;">1</div>
<div class="t " style="left:1171px;top:941.27px;font-size:18.7px;font-weight:400;color:#222;">$2,750.00</div>
<div class="t " style="right:159px;top:941.27px;font-size:18.7px;font-weight:400;color:#222;">$2,750.00</div>
<div class="t " style="left:486px;top:995.72px;font-size:18.7px;font-weight:400;color:#222;">4</div>
<div class="t " style="left:538px;top:995.42px;font-size:19.05px;font-weight:400;color:#222;">Executive coaching sessions (per hour)</div>
<div class="t " style="left:1092px;top:995.72px;font-size:18.7px;font-weight:400;color:#222;">6</div>
<div class="t " style="left:1171px;top:995.72px;font-size:18.7px;font-weight:400;color:#222;">$350.00</div>
<div class="t " style="right:159px;top:995.72px;font-size:18.7px;font-weight:400;color:#222;">$2,100.00</div>
<div class="t " style="left:486px;top:1047.57px;font-size:18.7px;font-weight:400;color:#222;">5</div>
<div class="t " style="left:538px;top:1047.27px;font-size:19.05px;font-weight:400;color:#222;">Competitive analysis <span style="display:inline-block;width:14.4px;height:1.7px;background:#222;vertical-align:0.25em;margin:0 2.9px"></span> 5 key competitors</div>
<div class="t " style="left:1092px;top:1047.57px;font-size:18.7px;font-weight:400;color:#222;">1</div>
<div class="t " style="left:1171px;top:1047.57px;font-size:18.7px;font-weight:400;color:#222;">$1,800.00</div>
<div class="t " style="right:159px;top:1047.57px;font-size:18.7px;font-weight:400;color:#222;">$1,800.00</div>
<div class="t " style="left:486px;top:1101.77px;font-size:18.7px;font-weight:400;color:#222;">6</div>
<div class="t " style="left:538px;top:1101.47px;font-size:19.05px;font-weight:400;color:#222;">Slide deck design and production</div>
<div class="t " style="left:1092px;top:1101.77px;font-size:18.7px;font-weight:400;color:#222;">3</div>
<div class="t " style="left:1171px;top:1101.77px;font-size:18.7px;font-weight:400;color:#222;">$600.00</div>
<div class="t " style="right:159px;top:1101.77px;font-size:18.7px;font-weight:400;color:#222;">$1,800.00</div>
<svg style="position:absolute;left:1533px;top:1122px;" width="20" height="14" viewBox="0 0 20 14" fill="none"><path d="M10 6.5l7 7H3z" fill="#fff"/><path d="M10 6.5l7 6.5" stroke="#e2e2e2" stroke-width="1"/><path d="M5.5 2.5V14" stroke="#e6e6e6" stroke-width="1.2"/><circle cx="10" cy="14" r="1.2" fill="#111"/></svg>
<svg style="position:absolute;left:0px;top:0px;transform:rotate(0deg)" width="16" height="16" viewBox="0 0 16 16"><path d="M0 0h16A16 16 0 0 0 0 16z" fill="#000"/></svg>
<svg style="position:absolute;left:1584px;top:0px;transform:rotate(90deg)" width="16" height="16" viewBox="0 0 16 16"><path d="M0 0h16A16 16 0 0 0 0 16z" fill="#000"/></svg>
<svg style="position:absolute;left:1584px;top:1120px;transform:rotate(180deg)" width="16" height="16" viewBox="0 0 16 16"><path d="M0 0h16A16 16 0 0 0 0 16z" fill="#000"/></svg>
<svg style="position:absolute;left:0px;top:1120px;transform:rotate(270deg)" width="16" height="16" viewBox="0 0 16 16"><path d="M0 0h16A16 16 0 0 0 0 16z" fill="#000"/></svg>
</body></html>
